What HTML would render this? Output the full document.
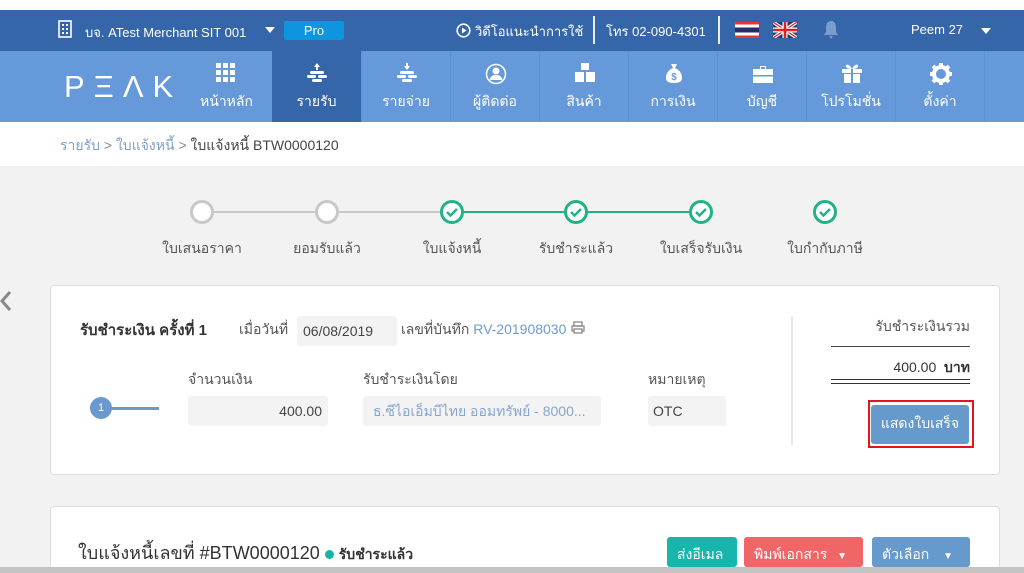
<!DOCTYPE html>
<html style="overflow:hidden;height:573px"><head><meta charset="utf-8">
<style>
*{box-sizing:border-box;margin:0;padding:0}
body{width:1024px;height:573px;overflow:hidden;background:#f2f2f2;font-family:"Liberation Sans","Noto Sans CJK SC",sans-serif;position:relative;color:#333}
.abs{position:absolute}
.top{left:0;top:10px;width:1024px;height:41px;background:#3566a9;color:#fff;font-size:13px}
.nav{left:0;top:51px;width:1024px;height:71px;background:#6699d9}
.tab{position:absolute;top:0;width:89px;height:71px;color:#fff;font-size:14px;text-align:center;border-left:1px solid #5e90cf}
.tab .lbl{position:absolute;top:40px;width:100%;text-align:center}
.tab svg{position:absolute;left:34px;top:12px}
.crumb{left:0;top:122px;width:1024px;height:44px;background:#fff}
.card{background:#fff;border:1px solid #ddd;border-radius:4px}
.step{position:absolute;top:200px;width:24px;height:24px;border-radius:50%;border:3px solid #c8c8c8;background:#fff}
.step.g{border-color:#22b287}
.sl{position:absolute;top:238px;font-size:14px;color:#555;text-align:center;width:120px}
.inp{position:absolute;background:#f3f3f3;border-radius:3px;font-size:14px;height:30px;line-height:30px}
.btn{position:absolute;top:537px;height:36px;border-radius:3px;color:#fff;font-size:14px;line-height:34px;padding:0 10px}
</style></head><body>
<div class="abs" style="left:0;top:0;width:1024px;height:10px;background:#fff"></div>
<div class="abs top">
 <svg class="abs" style="left:58px;top:10px" width="14" height="18"><rect x="1" y="1" width="12" height="16" fill="none" stroke="#fff" stroke-width="1.6"/><g fill="#fff"><rect x="4" y="4" width="2" height="2"/><rect x="8" y="4" width="2" height="2"/><rect x="4" y="8" width="2" height="2"/><rect x="8" y="8" width="2" height="2"/><rect x="4" y="12" width="2" height="2"/><rect x="8" y="12" width="2" height="2"/></g></svg>
 <div class="abs" style="left:85px;top:12px">บจ. ATest Merchant SIT 001</div>
 <div class="abs" style="left:265px;top:17px;border:5px solid transparent;border-top:6px solid #fff"></div>
 <div class="abs" style="left:284px;top:11px;width:60px;height:19px;background:#0d95e0;border-radius:2px;text-align:center;line-height:19px;font-size:13px">Pro</div>
 <svg class="abs" style="left:456px;top:13px" width="15" height="15"><circle cx="7.5" cy="7.5" r="6.3" fill="none" stroke="#fff" stroke-width="1.6"/><path d="M6 4.5v6l4.5-3z" fill="#fff"/></svg>
 <div class="abs" style="left:475px;top:11px">วิดีโอแนะนำการใช้</div>
 <div class="abs" style="left:593px;top:6px;width:2px;height:28px;background:#e8eef7"></div>
 <div class="abs" style="left:606px;top:11px">โทร 02-090-4301</div>
 <div class="abs" style="left:718px;top:6px;width:2px;height:28px;background:#e8eef7"></div>
 <div class="abs" style="left:735px;top:12px;width:24px;height:16px;background:linear-gradient(#e33 0 17%,#fff 17% 33%,#2d2a6a 33% 67%,#fff 67% 83%,#e33 83%)"></div>
 <svg class="abs" style="left:773px;top:12px" width="24" height="16"><rect width="24" height="16" fill="#243a7a"/><path d="M0 0L24 16M24 0L0 16" stroke="#fff" stroke-width="3.5"/><path d="M0 0L24 16M24 0L0 16" stroke="#d22" stroke-width="1.2"/><path d="M12 0v16M0 8h24" stroke="#fff" stroke-width="5"/><path d="M12 0v16M0 8h24" stroke="#d22" stroke-width="2.6"/></svg>
 <svg class="abs" style="left:823px;top:10px" width="16" height="20"><path d="M8 1c-4 0-5 4-5 7v4l-2 3h14l-2-3V8c0-3-1-7-5-7z M6 16h4l-2 3z" fill="#7b9dcc"/></svg>
 <div class="abs" style="left:911px;top:12px">Peem 27</div>
 <div class="abs" style="left:981px;top:18px;border:5px solid transparent;border-top:6px solid #fff"></div>
</div>
<div class="abs nav">
 <div class="abs" style="left:64px;top:18px;color:#fff;font-size:31px;letter-spacing:9px;font-weight:300">PΞΛK</div>
 <div class="tab" style="left:182px;border-left:none"><svg width="20" height="20"><g fill="#fff"><rect x="0" y="0" width="5" height="5"/><rect x="7" y="0" width="5" height="5"/><rect x="14" y="0" width="5" height="5"/><rect x="0" y="7" width="5" height="5"/><rect x="7" y="7" width="5" height="5"/><rect x="14" y="7" width="5" height="5"/><rect x="0" y="14" width="5" height="5"/><rect x="7" y="14" width="5" height="5"/><rect x="14" y="14" width="5" height="5"/></g></svg><div class="lbl">หน้าหลัก</div></div>
 <div class="tab" style="left:272px;background:#3566a9;border-left:none"><svg width="22" height="22"><g fill="#fff"><path d="M11 0l3 4h-2v3h-2V4H8z"/><rect x="4" y="8" width="14" height="3" rx="1.5"/><rect x="1" y="12" width="9" height="3" rx="1.5"/><rect x="12" y="12" width="9" height="3" rx="1.5"/><rect x="6" y="16" width="10" height="3" rx="1.5"/></g></svg><div class="lbl">รายรับ</div></div>
 <div class="tab" style="left:361px"><svg width="22" height="22"><g fill="#fff"><path d="M11 7l3-4h-2V0h-2v3H8z"/><rect x="4" y="8" width="14" height="3" rx="1.5"/><rect x="1" y="12" width="9" height="3" rx="1.5"/><rect x="12" y="12" width="9" height="3" rx="1.5"/><rect x="6" y="16" width="10" height="3" rx="1.5"/></g></svg><div class="lbl">รายจ่าย</div></div>
 <div class="tab" style="left:450px"><svg width="22" height="22"><circle cx="11" cy="11" r="9.5" fill="none" stroke="#fff" stroke-width="1.6"/><circle cx="11" cy="8" r="3.5" fill="#fff"/><path d="M4.5 17c1-4 3.5-5 6.5-5s5.5 1 6.5 5z" fill="#fff"/></svg><div class="lbl">ผู้ติดต่อ</div></div>
 <div class="tab" style="left:539px"><svg width="22" height="22"><g fill="#fff"><rect x="7" y="0" width="8" height="7"/><rect x="1" y="9" width="9" height="10"/><rect x="12" y="9" width="9" height="10"/></g></svg><div class="lbl">สินค้า</div></div>
 <div class="tab" style="left:628px"><svg width="22" height="22"><path d="M8 1h6l-2 4c5 2 7 6 7 10 0 3-2 5-8 5s-8-2-8-5c0-4 2-8 7-10z" fill="#fff"/><text x="11" y="17" font-size="10" font-weight="bold" text-anchor="middle" fill="#6699d9" font-family="Liberation Sans">$</text></svg><div class="lbl">การเงิน</div></div>
 <div class="tab" style="left:717px"><svg width="22" height="22"><path d="M8 3h6v3h-1V4h-4v2H8z M1 6h20v14H1z" fill="#fff"/><rect x="1" y="12" width="20" height="1.5" fill="#6699d9"/></svg><div class="lbl">บัญชี</div></div>
 <div class="tab" style="left:806px"><svg width="22" height="22"><g fill="#fff"><rect x="1" y="6" width="20" height="4"/><rect x="3" y="11" width="16" height="9"/><path d="M11 6C8 0 4 1 5 4c1 2 6 2 6 2zm0 0c3-6 7-5 6-2-1 2-6 2-6 2z"/></g><rect x="10" y="6" width="2" height="14" fill="#6699d9"/></svg><div class="lbl">โปรโมชั่น</div></div>
 <div class="tab" style="left:895px"><svg width="22" height="22"><circle cx="11" cy="11" r="7" fill="none" stroke="#fff" stroke-width="4"/><g stroke="#fff" stroke-width="4"><path d="M11 0v5M11 17v5M0 11h5M17 11h5M3 3l4 4M15 15l4 4M19 3l-4 4M7 15l-4 4"/></g><circle cx="11" cy="11" r="3" fill="#6699d9"/></svg><div class="lbl">ตั้งค่า</div></div>
 <div class="abs" style="left:984px;top:0;width:1px;height:71px;background:#5e90cf"></div>
</div>
<div class="abs crumb"><div class="abs" style="left:60px;top:13px;font-size:14px;color:#888"><span style="color:#7fa0c8">รายรับ</span> &gt; <span style="color:#7fa0c8">ใบแจ้งหนี้</span> &gt; <span style="color:#444">ใบแจ้งหนี้ BTW0000120</span></div></div>

<div class="abs" style="left:210px;top:211px;width:240px;height:2px;background:#c8c8c8"></div>
<div class="abs" style="left:450px;top:211px;width:252px;height:2px;background:#22b287"></div>
<div class="step" style="left:190px"></div>
<div class="step" style="left:315px"></div>
<div class="step g" style="left:440px"></div>
<div class="step g" style="left:564px"></div>
<div class="step g" style="left:689px"></div>
<div class="step g" style="left:813px"></div>
<svg class="abs" style="left:440px;top:200px;overflow:visible" width="400" height="24"><g fill="none" stroke="#22b287" stroke-width="2.5"><path d="M7 12l3.5 3.5L17 9"/><path d="M131 12l3.5 3.5L141 9"/><path d="M256 12l3.5 3.5L266 9"/><path d="M380 12l3.5 3.5L390 9"/></g></svg>
<div class="sl" style="left:142px">ใบเสนอราคา</div>
<div class="sl" style="left:267px">ยอมรับแล้ว</div>
<div class="sl" style="left:392px">ใบแจ้งหนี้</div>
<div class="sl" style="left:516px">รับชำระแล้ว</div>
<div class="sl" style="left:641px">ใบเสร็จรับเงิน</div>
<div class="sl" style="left:765px">ใบกำกับภาษี</div>

<svg class="abs" style="left:0;top:290px" width="12" height="22"><path d="M10 2L2 11l8 9" fill="none" stroke="#888" stroke-width="3"/></svg>

<div class="abs card" style="left:50px;top:285px;width:950px;height:190px"></div>
<div class="abs" style="left:80px;top:318px;font-size:15px;font-weight:bold;color:#333">รับชำระเงิน ครั้งที่ 1</div>
<div class="abs" style="left:239px;top:319px;font-size:14px;color:#555">เมื่อวันที่</div>
<div class="inp" style="left:297px;top:316px;width:100px;padding-left:6px;color:#444">06/08/2019</div>
<div class="abs" style="left:401px;top:319px;font-size:14px;color:#555">เลขที่บันทึก <span style="color:#6f9ad0">RV-201908030</span></div>
<svg class="abs" style="left:571px;top:321px" width="14" height="13"><g fill="none" stroke="#888" stroke-width="1.3"><rect x="3" y="1" width="8" height="4"/><rect x="1" y="5" width="12" height="5"/><rect x="3" y="8" width="8" height="4" fill="#fff"/></g></svg>
<div class="abs" style="left:188px;top:369px;font-size:14px;color:#555">จำนวนเงิน</div>
<div class="abs" style="left:363px;top:369px;font-size:14px;color:#555">รับชำระเงินโดย</div>
<div class="abs" style="left:648px;top:369px;font-size:14px;color:#555">หมายเหตุ</div>
<div class="abs" style="left:90px;top:397px;width:22px;height:22px;border-radius:50%;background:#6a98cf;color:#fff;font-size:11px;text-align:center;line-height:22px">1</div>
<div class="abs" style="left:110px;top:407px;width:49px;height:3px;background:#6a98cf"></div>
<div class="inp" style="left:188px;top:396px;width:140px;text-align:right;padding-right:6px;color:#444">400.00</div>
<div class="inp" style="left:363px;top:396px;width:238px;padding-left:10px;color:#86a6d0">ธ.ซีไอเอ็มบีไทย ออมทรัพย์ - 8000...</div>
<div class="inp" style="left:648px;top:396px;width:78px;padding-left:5px;color:#444">OTC</div>
<div class="abs" style="left:791px;top:316px;width:2px;height:129px;background:#e6e6e6"></div>
<div class="abs" style="left:860px;top:316px;width:110px;text-align:right;font-size:14px;color:#555">รับชำระเงินรวม</div>
<div class="abs" style="left:831px;top:346px;width:139px;height:1px;background:#444"></div>
<div class="abs" style="left:840px;top:357px;width:130px;text-align:right;font-size:14px;color:#333">400.00 &nbsp;<b>บาท</b></div>
<div class="abs" style="left:831px;top:379px;width:139px;height:5px;border-top:1px solid #333;border-bottom:1px solid #333"></div>
<div class="abs" style="left:868px;top:400px;width:106px;height:48px;border:2px solid #e8111d"></div>
<div class="abs" style="left:871px;top:405px;width:98px;height:39px;background:#6699cc;border-radius:3px;color:#fff;font-size:14px;text-align:center;line-height:37px">แสดงใบเสร็จ</div>

<div class="abs card" style="left:50px;top:506px;width:950px;height:67px;border-bottom:none;border-radius:4px 4px 0 0"></div>
<div class="abs" style="left:78px;top:542px;font-size:18px;color:#333;line-height:22px">ใบแจ้งหนี้เลขที่ #BTW0000120 <span style="display:inline-block;width:9px;height:9px;border-radius:50%;background:#17b5a6;vertical-align:middle"></span> <span style="font-size:14px;font-weight:bold">รับชำระแล้ว</span></div>
<div class="btn" style="left:667px;width:70px;height:30px;background:#17b5ab">ส่งอีเมล</div>
<div class="btn" style="left:744px;width:119px;height:30px;background:#f06667">พิมพ์เอกสาร <span style="font-size:10px;margin-left:6px">▼</span></div>
<div class="btn" style="left:872px;width:98px;height:30px;background:#6699cc">ตัวเลือก <span style="font-size:10px;margin-left:10px">▼</span></div>
<div class="abs" style="left:0;top:567px;width:1024px;height:6px;background:#c3c3c3"></div>
</body></html>
